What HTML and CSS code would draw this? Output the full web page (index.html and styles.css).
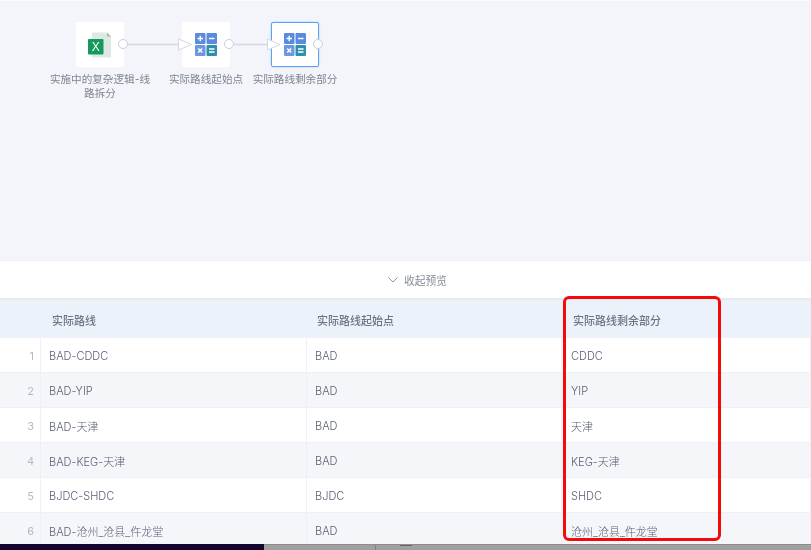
FILE: index.html
```html
<!DOCTYPE html>
<html lang="en">
<head>
    <meta charset="UTF-8">
    <meta name="viewport" content="width=device-width, initial-scale=1.0">
    <title>实际路线</title>
    <link rel="stylesheet" href="styles.css">
</head>
<body>
    <div class="page">
        <div class="canvas">
            <div class="node node-excel">
                <div class="node-box">
                    <svg width="24" height="26" viewBox="0 0 24 26">
                        <path d="M4 0.500h15l4 4v21H4z" fill="#dfe9e4"></path>
                        <path d="M19 0.500l4 4h-4z" fill="#b0b8b4"></path>
                        <rect x="0" y="7" width="15.500" height="15.500" rx="1" fill="#149a5c"></rect>
                        <text x="7.700" y="19" class="excel-x">X</text>
                    </svg>
                    <span class="port"></span>
                </div>
                <div class="node-label">实施中的复杂逻辑-线路拆分</div>
            </div>

            <div class="node node-start">
                <div class="node-box">
                    <svg width="22" height="23" viewBox="0 0 22 23">
                        <rect width="10.500" height="11" rx="1" fill="#5b8bdc"></rect>
                        <rect x="11.500" width="10.500" height="11" rx="1" fill="#5b8bdc"></rect>
                        <rect y="12" width="10.500" height="11" rx="1" fill="#6d97e0"></rect>
                        <rect x="11.500" y="12" width="10.500" height="11" rx="1" fill="#2f90ad"></rect>
                        <path d="M2.500 5.500h5.500M5.250 2.750v5.500M14 5.500h5.500M14 16h5.500M14 19h5.500M3.200 15.500l4 4M7.200 15.500l-4 4" stroke="#fff" stroke-width="1.400" fill="none"></path>
                    </svg>
                    <span class="port"></span>
                </div>
                <div class="node-label">实际路线起始点</div>
            </div>

            <div class="node node-rest">
                <div class="node-box node-active">
                    <svg width="22" height="23" viewBox="0 0 22 23">
                        <rect width="10.500" height="11" rx="1" fill="#5b8bdc"></rect>
                        <rect x="11.500" width="10.500" height="11" rx="1" fill="#5b8bdc"></rect>
                        <rect y="12" width="10.500" height="11" rx="1" fill="#6d97e0"></rect>
                        <rect x="11.500" y="12" width="10.500" height="11" rx="1" fill="#2f90ad"></rect>
                        <path d="M2.500 5.500h5.500M5.250 2.750v5.500M14 5.500h5.500M14 16h5.500M14 19h5.500M3.200 15.500l4 4M7.200 15.500l-4 4" stroke="#fff" stroke-width="1.400" fill="none"></path>
                    </svg>
                    <span class="port"></span>
                </div>
                <div class="node-label">实际路线剩余部分</div>
            </div>

            <svg class="links" width="811" height="260">
                <line x1="128" y1="44.500" x2="179" y2="44.500"></line>
                <polygon points="178.500,39 178.500,50 191.500,44.500"></polygon>
                <line x1="234" y1="44.500" x2="268" y2="44.500"></line>
                <polygon points="267.500,39 267.500,50 280,44.500"></polygon>
            </svg>
        </div>

        <div class="collapse-bar">
            <svg width="10" height="6" viewBox="0 0 10 6"><path d="M.5.500L5 5l4.500-4.500" fill="none" stroke="#8b95a5"></path></svg>
            <span>收起预览</span>
        </div>

        <div class="grid">
            <div class="row head">
                <div class="cell idx"></div>
                <div class="cell">实际路线</div>
                <div class="cell">实际路线起始点</div>
                <div class="cell">实际路线剩余部分</div>
            </div>
            <div class="row">
                <div class="cell idx">1</div>
                <div class="cell">BAD-CDDC</div>
                <div class="cell">BAD</div>
                <div class="cell">CDDC</div>
            </div>
            <div class="row">
                <div class="cell idx">2</div>
                <div class="cell">BAD-YIP</div>
                <div class="cell">BAD</div>
                <div class="cell">YIP</div>
            </div>
            <div class="row">
                <div class="cell idx">3</div>
                <div class="cell">BAD-天津</div>
                <div class="cell">BAD</div>
                <div class="cell">天津</div>
            </div>
            <div class="row">
                <div class="cell idx">4</div>
                <div class="cell">BAD-KEG-天津</div>
                <div class="cell">BAD</div>
                <div class="cell">KEG-天津</div>
            </div>
            <div class="row">
                <div class="cell idx">5</div>
                <div class="cell">BJDC-SHDC</div>
                <div class="cell">BJDC</div>
                <div class="cell">SHDC</div>
            </div>
            <div class="row">
                <div class="cell idx">6</div>
                <div class="cell">BAD-沧州_沧县_仵龙堂</div>
                <div class="cell">BAD</div>
                <div class="cell">沧州_沧县_仵龙堂</div>
            </div>
        </div>

        <div class="highlight"></div>

        <div class="taskbar">
            <div class="taskbar-dark"></div>
            <div class="taskbar-grey">
                <span class="taskbar-sep"></span>
                <span class="taskbar-dash"></span>
            </div>
        </div>
    </div>
</body>
</html>
```

FILE: styles.css
```css
* {
    box-sizing: border-box;
    margin: 0;
    padding: 0;
}
html, body {
    width: 811px;
    height: 550px;
    overflow: hidden;
}
body {
    font-family: 'Inter', 'Noto Sans CJK SC', sans-serif;
    font-size: 11px;
    font-weight: 300;
    color: #5a6275;
    background-color: #fff;
}
.page {
    position: relative;
    width: 811px;
    height: 550px;
    overflow: hidden;
    filter: blur(0.45px);
}
.canvas {
    position: relative;
    height: 260px;
    background-color: #f3f5fa;
    border-top: 1px solid #fafbfd;
}
.links {
    position: absolute;
    left: 0;
    top: -1px;
}
.links line {
    stroke: #d3d8e4;
    stroke-width: 1.5;
}
.links polygon {
    fill: #fff;
    stroke: #d3d8e4;
}
.node {
    position: absolute;
    top: 21px;
    width: 108px;
    display: flex;
    flex-direction: column;
    align-items: center;
}
.node-excel { left: 46px; }
.node-start { left: 152px; }
.node-rest { left: 241px; }
.node-box {
    position: relative;
    width: 48px;
    height: 45px;
    background-color: #fff;
    border-radius: 2px;
    display: flex;
    align-items: center;
    justify-content: center;
}
.node-active {
    border: 1px solid #5aa2f5;
    box-shadow: 0 0 2px rgba(90, 162, 245, 0.5);
}
.excel-x {
    font-family: 'Liberation Sans', sans-serif;
    font-size: 12px;
    fill: #fff;
    text-anchor: middle;
}
.port {
    position: absolute;
    right: -4px;
    top: 17px;
    width: 10px;
    height: 10px;
    background-color: #fff;
    border: 1px solid #c9cfdd;
    border-radius: 50%;
}
.node-active .port {
    right: -5px;
    top: 16px;
}
.node-label {
    width: 108px;
    margin-top: 6px;
    line-height: 14px;
    font-size: 10.6px;
    font-weight: 400;
    color: #7d8592;
    text-align: center;
}
.collapse-bar {
    height: 40px;
    display: flex;
    align-items: center;
    justify-content: center;
    gap: 6px;
    padding-left: 24px;
    background-color: #fff;
    border-top: 1px solid #eceff5;
    border-bottom: 2px solid #e6e9f0;
    color: #868e9b;
    font-size: 10.8px;
    font-weight: 400;
}
.row {
    display: grid;
    grid-template-columns: 41px 266px 255px 249px;
    height: 35px;
    background-color: #fff;
    border-bottom: 1px solid #eef0f5;
}
.row:nth-child(odd) {
    background-color: #f4f6fa;
}
.row.head {
    height: 38px;
    background-color: #ebf2f9;
    font-weight: 500;
    color: #6b7685;
    border-bottom: none;
}
.cell {
    display: flex;
    align-items: center;
    padding: 1px 0 0 8px;
    border-right: 1px solid #eef0f5;
    white-space: nowrap;
}
.row:not(.head) .cell:last-child {
    padding-left: 9px;
}
.head .cell {
    padding-left: 11px;
}
.head .cell:nth-child(3) {
    padding-left: 10px;
}
.cell.idx {
    justify-content: flex-end;
    padding: 1px 6px 0 0;
    font-weight: 400;
    color: #a9bccb;
}
.highlight {
    position: absolute;
    left: 563px;
    top: 296px;
    width: 158px;
    height: 245px;
    border: 3px solid #f50a0a;
    border-radius: 6px;
}
.taskbar {
    position: absolute;
    left: 0;
    right: 0;
    bottom: 0;
    height: 6px;
    display: flex;
}
.taskbar-dark {
    width: 264px;
    background-color: #14062e;
}
.taskbar-grey {
    flex: 1;
    display: flex;
    align-items: flex-start;
    background-color: #a0a0a0;
    border-top: 1px solid #8e8e8e;
}
.taskbar-sep {
    width: 1px;
    height: 5px;
    margin-left: 111px;
    background-color: #808080;
}
.taskbar-dash {
    width: 12px;
    height: 1px;
    margin-left: 24px;
    background-color: #666;
}
```
